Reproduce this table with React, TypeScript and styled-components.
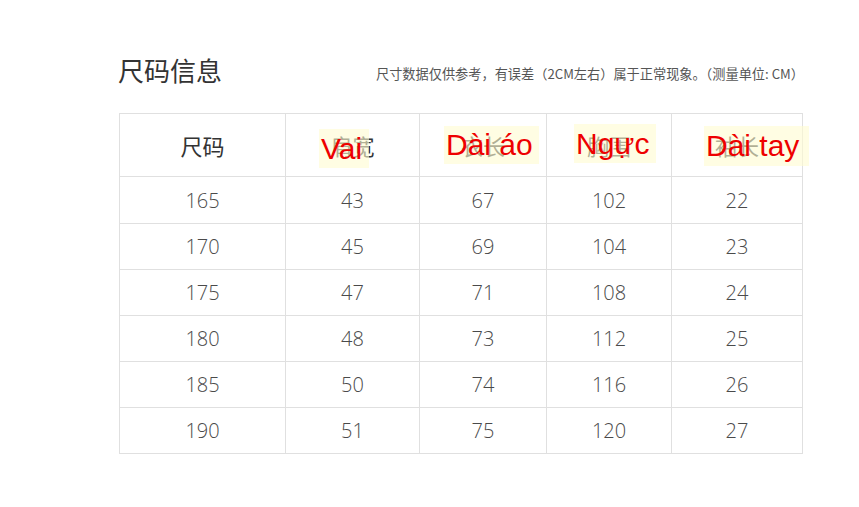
import React from "react";
import styled, { createGlobalStyle } from "styled-components";

const Global = createGlobalStyle`
  html, body { margin: 0; padding: 0; background: #fff; }
  body { font-family: "Noto Sans CJK SC", "Open Sans", sans-serif; }
`;

const Page = styled.div`
  width: 859px;
  height: 507px;
  box-sizing: border-box;
  padding: 49px 0 0 118px;
`;

const Header = styled.div`
  width: 686px;
  display: flex;
  justify-content: space-between;
  align-items: flex-end;
  height: 40px;
`;

const Title = styled.h1`
  margin: 0;
  font-family: "Noto Sans CJK SC", sans-serif;
  font-weight: 400;
  font-size: 26px;
  line-height: 38px;
  color: #333;
`;

const Note = styled.div`
  font-family: "Noto Sans CJK SC", sans-serif;
  font-size: 13.2px;
  line-height: 20px;
  color: #555;
  margin-bottom: 5px;
  white-space: nowrap;
`;

const Table = styled.table`
  margin-top: 24px;
  margin-left: 1px;
  border-collapse: collapse;
  table-layout: fixed;
  width: 684px;
`;

const HeadCell = styled.th`
  position: relative;
  height: 62px;
  border: 1px solid #e0e0e0;
  font-family: "Noto Sans CJK SC", sans-serif;
  font-weight: 400;
  font-size: 22px;
  color: #333;
  text-align: center;
  padding: 0;
`;

const Cell = styled.td<{ $first?: boolean }>`
  height: ${(p) => (p.$first ? 46 : 45)}px;
  border: 1px solid #e0e0e0;
  font-family: "Open Sans", sans-serif;
  font-weight: 300;
  font-size: 20px;
  color: #4a4a4a;
  text-align: center;
  padding: 0;
`;

const Label = styled.span<{ $left: number; $top: number; $w: number; $h: number }>`
  position: absolute;
  left: ${(p) => p.$left}px;
  top: ${(p) => p.$top}px;
  width: ${(p) => p.$w}px;
  height: ${(p) => p.$h}px;
  background: rgba(255, 252, 210, 0.62);
  color: #ee0000;
  font-family: "Liberation Sans", Arial, sans-serif;
  font-size: 30px;
  line-height: ${(p) => p.$h}px;
  text-align: left;
  padding-left: 2px;
  box-sizing: border-box;
  white-space: nowrap;
`;

const cols = [
  { zh: "尺码", w: 166 },
  { zh: "肩宽", w: 134, vi: "Vai", l: 33, t: 15, lw: 50, lh: 39 },
  { zh: "衣长", w: 127, vi: "Dài áo", l: 24, t: 12, lw: 95, lh: 38 },
  { zh: "胸围", w: 125, vi: "Ngực", l: 27, t: 10, lw: 82, lh: 39 },
  { zh: "袖长", w: 131, vi: "Dài tay", l: 32, t: 12, lw: 105, lh: 40 },
];

const rows = [
  [165, 43, 67, 102, 22],
  [170, 45, 69, 104, 23],
  [175, 47, 71, 108, 24],
  [180, 48, 73, 112, 25],
  [185, 50, 74, 116, 26],
  [190, 51, 75, 120, 27],
];

export default function App() {
  return (
    <>
      <Global />
      <Page>
        <Header>
          <Title>尺码信息</Title>
          <Note>尺寸数据仅供参考，有误差（2CM左右）属于正常现象。（测量单位: CM）</Note>
        </Header>
        <Table>
          <colgroup>
            {cols.map((c) => (
              <col key={c.zh} style={{ width: c.w }} />
            ))}
          </colgroup>
          <thead>
            <tr>
              {cols.map((c) => (
                <HeadCell key={c.zh}>
                  {c.zh}
                  {c.vi && (
                    <Label $left={c.l!} $top={c.t!} $w={c.lw!} $h={c.lh!}>
                      {c.vi}
                    </Label>
                  )}
                </HeadCell>
              ))}
            </tr>
          </thead>
          <tbody>
            {rows.map((r, ri) => (
              <tr key={r[0]}>
                {r.map((v, i) => (
                  <Cell key={i} $first={ri === 0}>
                    {v}
                  </Cell>
                ))}
              </tr>
            ))}
          </tbody>
        </Table>
      </Page>
    </>
  );
}
